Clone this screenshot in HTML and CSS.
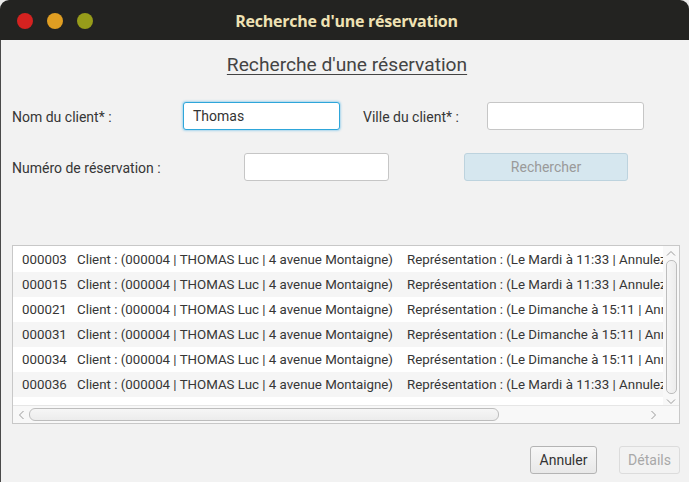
FILE: index.html
```html
<!DOCTYPE html>
<html lang="fr">
<head>
<meta charset="utf-8">
<title>Recherche d'une réservation</title>
<link rel="stylesheet" href="styles.css">
</head>
<body>
<div class="window">
  <header class="titlebar">
    <div class="lights">
      <span class="light red"></span>
      <span class="light orange"></span>
      <span class="light olive"></span>
    </div>
    <div class="wtitle">Recherche d'une réservation</div>
    <div></div>
  </header>
  <main class="content">
    <h1 class="heading">Recherche d'une réservation</h1>
    <div class="form-row row1">
      <label class="lbl lbl-nom">Nom du client* :</label>
      <div class="input focus input-nom">Thomas</div>
      <label class="lbl lbl-ville">Ville du client* :</label>
      <div class="input input-ville"></div>
    </div>
    <div class="form-row row2">
      <label class="lbl lbl-num">Numéro de réservation :</label>
      <div class="input input-num"></div>
      <button class="btn btn-search" disabled>Rechercher</button>
    </div>
    <div class="list">
      <div class="viewport">
        <div class="lrow"><span class="c-id">000003</span><span class="c-cli">Client : (000004 | THOMAS Luc | 4 avenue Montaigne)</span><span class="c-rep">Représentation : (Le Mardi à 11:33 | Annulez</span></div>
        <div class="lrow alt"><span class="c-id">000015</span><span class="c-cli">Client : (000004 | THOMAS Luc | 4 avenue Montaigne)</span><span class="c-rep">Représentation : (Le Mardi à 11:33 | Annulez</span></div>
        <div class="lrow"><span class="c-id">000021</span><span class="c-cli">Client : (000004 | THOMAS Luc | 4 avenue Montaigne)</span><span class="c-rep">Représentation : (Le Dimanche à 15:11 | Annulez</span></div>
        <div class="lrow alt"><span class="c-id">000031</span><span class="c-cli">Client : (000004 | THOMAS Luc | 4 avenue Montaigne)</span><span class="c-rep">Représentation : (Le Dimanche à 15:11 | Annulez</span></div>
        <div class="lrow"><span class="c-id">000034</span><span class="c-cli">Client : (000004 | THOMAS Luc | 4 avenue Montaigne)</span><span class="c-rep">Représentation : (Le Dimanche à 15:11 | Annulez</span></div>
        <div class="lrow alt"><span class="c-id">000036</span><span class="c-cli">Client : (000004 | THOMAS Luc | 4 avenue Montaigne)</span><span class="c-rep">Représentation : (Le Mardi à 11:33 | Annulez</span></div>
      </div>
      <div class="vscroll">
        <svg class="arrow" width="10" height="6" viewBox="0 0 10 6"><path d="M1 5.5 L5 1.5 L9 5.5" fill="none" stroke="#9a9a9a" stroke-width="1"/></svg>
        <div class="vthumb"></div>
        <svg class="arrow" width="10" height="6" viewBox="0 0 10 6"><path d="M1 0.5 L5 4.5 L9 0.5" fill="none" stroke="#9a9a9a" stroke-width="1"/></svg>
      </div>
      <div class="hscroll">
        <svg class="arrow" width="6" height="10" viewBox="0 0 6 10"><path d="M5.5 1 L1.5 5 L5.5 9" fill="none" stroke="#9a9a9a" stroke-width="1"/></svg>
        <div class="hthumb"></div>
        <div class="hspace"></div>
        <svg class="arrow" width="6" height="10" viewBox="0 0 6 10"><path d="M0.5 1 L4.5 5 L0.5 9" fill="none" stroke="#9a9a9a" stroke-width="1"/></svg>
      </div>
      <div class="corner"></div>
    </div>
    <div class="actions">
      <button class="btn btn-cancel">Annuler</button>
      <button class="btn btn-details" disabled>Détails</button>
    </div>
  </main>
</div>
</body>
</html>
```
FILE: styles.css
```css
* { box-sizing: border-box; }
html, body { margin: 0; padding: 0; }
body {
  width: 689px;
  height: 482px;
  background: #eaeaea;
  font-family: Roboto, "Liberation Sans", sans-serif;
  overflow: hidden;
}
.window {
  width: 689px;
  height: 482px;
  display: flex;
  flex-direction: column;
  background: #f2f2f2;
  border-radius: 9px 9px 0 0;
  overflow: hidden;
}
.titlebar {
  height: 40px;
  flex: none;
  background: #232321;
  display: grid;
  grid-template-columns: 1fr auto 1fr;
  align-items: center;
}
.lights {
  display: flex;
  gap: 14px;
  padding-left: 17px;
  padding-top: 2px;
}
.light {
  width: 16px;
  height: 16px;
  border-radius: 50%;
  display: block;
}
.red { background: #d42220; }
.orange { background: #e09e22; }
.olive { background: #979c1a; }
.wtitle {
  color: #efe2b4;
  font-family: "Open Sans", "DejaVu Sans", sans-serif;
  font-weight: 700;
  font-size: 16px;
  letter-spacing: -0.25px;
  padding-top: 2px;
  padding-left: 4px;
}
.content {
  flex: 1;
  display: flex;
  flex-direction: column;
  padding: 0 9px 8px 11px;
  border-left: 1px solid #4a4a4a;
}
.heading {
  margin: 12px 0 0 0;
  font-weight: 400;
  font-size: 19.2px;
  line-height: 26px;
  text-align: center;
  color: #444;
  text-decoration: underline;
  text-decoration-thickness: 1px;
  text-underline-offset: 3px;
  padding-left: 2px;
}
.form-row {
  display: flex;
  align-items: center;
  height: 28px;
}
.row1 { margin-top: 24px; }
.row2 { margin-top: 23px; }
.lbl {
  font-size: 14px;
  color: #363636;
  padding-top: 2px;
}
.lbl-nom { width: 171px; }
.lbl-ville { margin-left: 23px; width: 124px; }
.lbl-num { width: 232px; }
.input {
  height: 28px;
  background: #fff;
  border: 1px solid #c6c6c6;
  border-radius: 3px;
  font-size: 14px;
  color: #333;
  padding: 0 9px;
  line-height: 26px;
}
.input.focus {
  border: 1px solid #2ea6da;
  box-shadow: 0 0 2px 1px rgba(80, 180, 230, 0.45);
}
.input-nom { width: 157px; }
.input-ville { width: 157px; }
.input-num { width: 145px; }
.btn {
  font-family: Roboto, "Liberation Sans", sans-serif;
  font-size: 14px;
  height: 28px;
  border-radius: 3px;
  padding: 0;
}
.btn-search {
  margin-left: 75px;
  width: 164px;
  background: #d6e7ef;
  border: 1px solid #bdd3de;
  color: #9a9a9a;
}
.list {
  margin-top: 64px;
  width: 668px;
  height: 179px;
  border: 1px solid #c8c8c8;
  background: #fff;
  display: grid;
  grid-template-columns: 1fr 16px;
  grid-template-rows: 1fr 18px;
}
.viewport {
  overflow: hidden;
  padding-top: 1px;
  white-space: nowrap;
}
.lrow {
  height: 25px;
  display: flex;
  align-items: center;
  font-size: 13.3px;
  color: #363636;
  padding-left: 9px;
  background: #fff;
}
.lrow.alt { background: #f5f5f5; }
.c-id { width: 55px; flex: none; }
.c-cli { width: 330px; flex: none; }
.c-rep { flex: none; }
.vscroll {
  display: flex;
  flex-direction: column;
  align-items: center;
  background: #f8f8f8;
  padding-top: 4px;
}
.vthumb {
  width: 11px;
  flex: 1;
  margin: 4px 0 5px 0;
  border: 1px solid #bdbdbd;
  border-radius: 5px;
  background: linear-gradient(to right, #f6f6f6, #ececec);
}
.vscroll .arrow { flex: none; }
.hscroll {
  display: flex;
  align-items: center;
  background: #f8f8f8;
  padding: 0 6px 0 5px;
  border-top: 1px solid #e6e6e6;
}
.hthumb {
  width: 470px;
  height: 13px;
  margin-left: 5px;
  border: 1px solid #bdbdbd;
  border-radius: 6px;
  background: linear-gradient(to bottom, #f6f6f6, #ececec);
}
.hspace { flex: 1; }
.corner { background: #f8f8f8; border-top: 1px solid #e6e6e6; }
.actions {
  margin-top: auto;
  display: flex;
  justify-content: flex-end;
  gap: 22px;
}
.btn-cancel {
  width: 67px;
  background: linear-gradient(to bottom, #f7f7f7, #e8e8e8);
  border: 1px solid #b4b4b4;
  color: #333;
}
.btn-details {
  width: 61px;
  background: #f2f2f2;
  border: 1px solid #dcdcdc;
  color: #a8a8a8;
}
```
